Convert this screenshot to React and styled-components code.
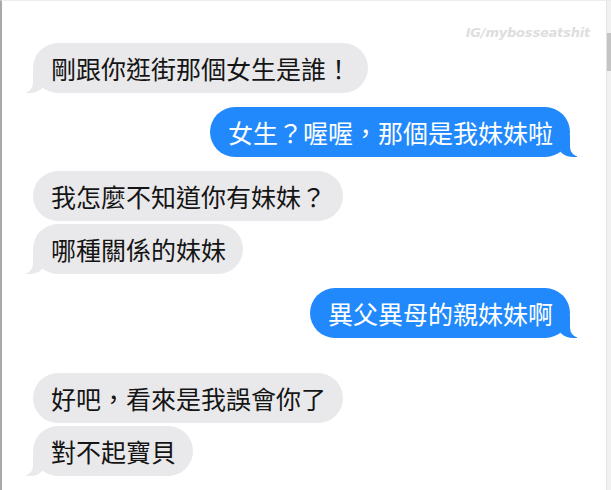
import React from 'react';
import styled, { createGlobalStyle } from 'styled-components';

const GlobalStyle = createGlobalStyle`
  html, body {
    margin: 0;
    padding: 0;
    background: #fff;
  }
`;

const Frame = styled.div`
  position: relative;
  display: flex;
  width: 611px;
  height: 490px;
  box-sizing: border-box;
  border-left: 2px solid #a9a9a9;
  border-top: 1px solid #ececec;
  background: #fff;
  overflow: hidden;
`;

const Thread = styled.div`
  flex: 1;
  display: flex;
  flex-direction: column;
  padding: 42px 36px 0 31px;
`;

const Watermark = styled.div`
  position: absolute;
  top: 24px;
  right: 21px;
  font-family: "DejaVu Sans", "Liberation Sans", sans-serif;
  font-style: italic;
  font-weight: 600;
  font-size: 13px;
  letter-spacing: -0.2px;
  color: #dedede;
`;

const Bubble = styled.div`
  position: relative;
  align-self: ${p => (p.$me ? 'flex-end' : 'flex-start')};
  margin-top: ${p => p.$gap}px;
  height: 50px;
  line-height: 50px;
  padding: 0 17px 0 18px;
  border-radius: 25px;
  background: ${p => (p.$me ? '#2189fb' : '#e9e9eb')};
  color: ${p => (p.$me ? '#fff' : '#151515')};
  font-family: "Noto Sans CJK TC", "Noto Sans CJK SC", sans-serif;
  font-size: 25px;
  white-space: nowrap;

  ${p => p.$tail && `
    &::before {
      content: '';
      position: absolute;
      bottom: 0;
      ${p.$me ? 'right' : 'left'}: -7px;
      width: 20px;
      height: 22px;
      background: ${p.$me ? '#2189fb' : '#e9e9eb'};
      ${p.$me ? 'border-bottom-left-radius' : 'border-bottom-right-radius'}: 16px 14px;
    }
    &::after {
      content: '';
      position: absolute;
      bottom: 0;
      ${p.$me ? 'right' : 'left'}: -10px;
      width: 10px;
      height: 22px;
      background: #fff;
      ${p.$me ? 'border-bottom-left-radius' : 'border-bottom-right-radius'}: 10px;
    }
  `}
`;

const Scrollbar = styled.div`
  width: 4px;
  border-left: 1px solid #e4e4e4;
  background: #f1f1f1;
`;

const Thumb = styled.div`
  margin-top: 32px;
  height: 38px;
  background: #c4c4c4;
`;

const messages = [
  { me: false, text: '剛跟你逛街那個女生是誰！' },
  { me: true, text: '女生？喔喔，那個是我妹妹啦' },
  { me: false, text: '我怎麼不知道你有妹妹？' },
  { me: false, text: '哪種關係的妹妹' },
  { me: true, text: '異父異母的親妹妹啊' },
  { me: false, text: '好吧，看來是我誤會你了', pause: true },
  { me: false, text: '對不起寶貝' },
];

export default function App() {
  return (
    <>
      <GlobalStyle />
      <Frame>
        <Thread>
          {messages.map((m, i) => {
            const prev = messages[i - 1];
            const next = messages[i + 1];
            let gap = 0;
            if (prev) gap = m.pause ? 35 : prev.me === m.me ? 3 : 14;
            const tail = !next || next.me !== m.me || next.pause;
            return (
              <Bubble key={i} $me={m.me} $gap={gap} $tail={tail}>
                {m.text}
              </Bubble>
            );
          })}
        </Thread>
        <Scrollbar>
          <Thumb />
        </Scrollbar>
        <Watermark>IG/mybosseatshit</Watermark>
      </Frame>
    </>
  );
}
